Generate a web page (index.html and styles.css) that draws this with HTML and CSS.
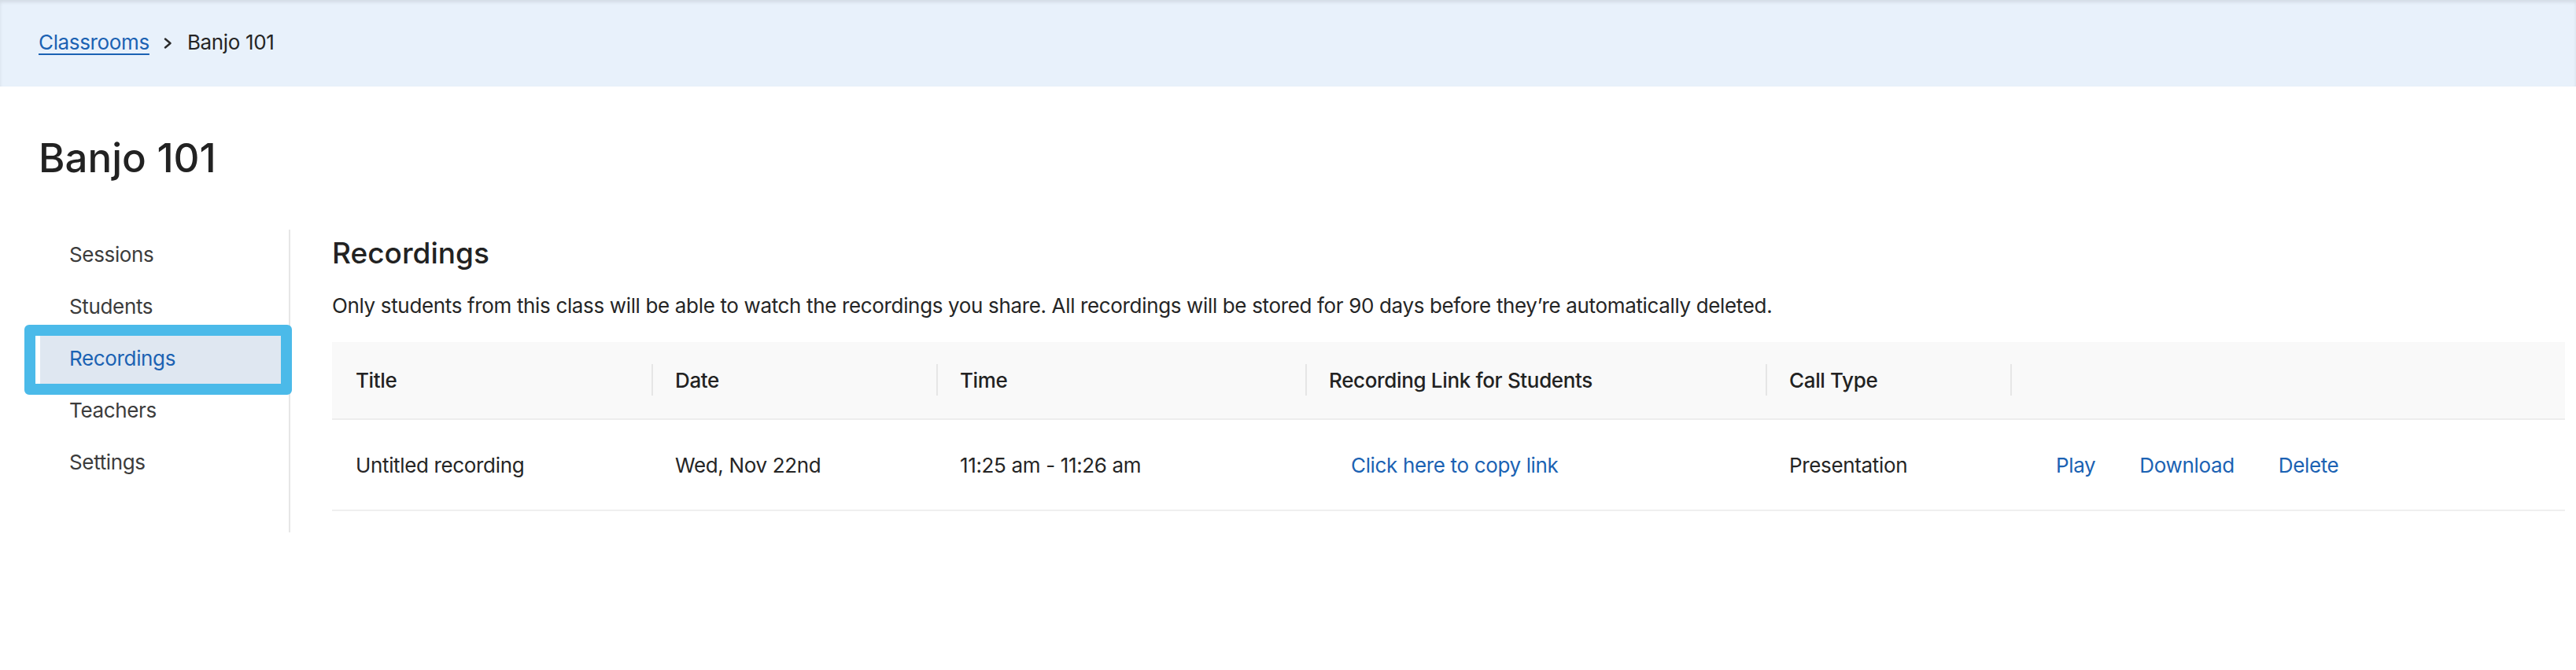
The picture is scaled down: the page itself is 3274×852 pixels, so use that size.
FILE: index.html
```html
<!DOCTYPE html>
<html lang="en">
<head>
  <meta charset="UTF-8">
  <title>Banjo 101 - Recordings</title>
  <link rel="stylesheet" href="styles.css">
</head>
<body>

  <div class="topbar">
    <nav class="breadcrumb">
      <a href="#" class="crumb-link">Classrooms</a>
      <svg class="crumb-sep" width="12" height="14" viewBox="0 0 12 14"><path d="M2 1.5 L8.5 7 L2 12.5" fill="none" stroke="#2a2a2a" stroke-width="2.4" stroke-linecap="round" stroke-linejoin="round"/></svg>
      <span class="crumb-current">Banjo 101</span>
    </nav>
  </div>

  <div class="page">
    <h1 class="class-title">Banjo 101</h1>

    <div class="layout">
      <aside class="sidebar">
        <a href="#" class="nav-link">Sessions</a>
        <a href="#" class="nav-link">Students</a>
        <a href="#" class="nav-link active">Recordings</a>
        <a href="#" class="nav-link">Teachers</a>
        <a href="#" class="nav-link">Settings</a>
      </aside>

      <main class="content">
        <h2>Recordings</h2>
        <p class="intro">Only students from this class will be able to watch the recordings you share. All recordings will be stored for 90 days before they’re automatically deleted.</p>

        <table class="rec-table">
          <colgroup>
            <col style="width: 406px">
            <col style="width: 362px">
            <col style="width: 469px">
            <col style="width: 585px">
            <col style="width: 311px">
            <col>
          </colgroup>
          <thead>
            <tr>
              <th>Title</th>
              <th>Date</th>
              <th>Time</th>
              <th>Recording Link for Students</th>
              <th>Call Type</th>
              <th></th>
            </tr>
          </thead>
          <tbody id="rows"></tbody>
        </table>
      </main>
    </div>
  </div>

  <script>
    const recordings = [
      {
        title: "Untitled recording",
        date: "Wed, Nov 22nd",
        time: "11:25 am - 11:26 am",
        type: "Presentation"
      }
    ];

    const tbody = document.getElementById("rows");
    recordings.forEach(r => {
      const tr = document.createElement("tr");
      tr.innerHTML = `<td>${r.title}</td><td>${r.date}</td><td>${r.time}</td>` +
        `<td><button class="link-btn">Click here to copy link</button></td>` +
        `<td>${r.type}</td>` +
        `<td><button class="link-btn">Play</button><button class="link-btn">Download</button><button class="link-btn">Delete</button></td>`;
      tbody.appendChild(tr);
    });
  </script>

</body>
</html>
```

FILE: styles.css
```css
body {
  margin: 0;
  font-family: Inter, "Noto Sans", sans-serif;
  font-size: 26px;
  letter-spacing: -0.35px;
  color: #252525;
  background-color: #ffffff;
}
.topbar {
  height: 110px;
  background-color: #e8f1fb;
  box-shadow: inset 0 3px 4px rgba(0, 0, 0, 0.09);
  display: flex;
  align-items: center;
  padding-left: 49px;
}
.breadcrumb {
  display: flex;
  align-items: center;
  gap: 18px;
  line-height: 36px;
  margin-top: -2px;
}
.crumb-link {
  color: #1b62b3;
  text-decoration: underline;
  text-decoration-thickness: 2px;
  text-underline-offset: 5px;
}
.crumb-sep {
  margin-top: 2px;
}
.crumb-current {
  color: #252525;
}
.page {
  padding: 0 14px 0 49px;
}
.class-title {
  margin: 61px 0 0;
  font-size: 51px;
  line-height: 60px;
  font-weight: 500;
  letter-spacing: 0;
  color: #222222;
}
.layout {
  display: flex;
  margin-top: 61px;
}
.sidebar {
  width: 312px;
  margin-left: -4px;
  padding: 3px 10px 57px 0;
  border-right: 2px solid #e6e6e6;
  display: flex;
  flex-direction: column;
  gap: 5px;
}
.nav-link {
  position: relative;
  height: 61px;
  line-height: 57px;
  padding-left: 43px;
  color: #3c3c3c;
  text-decoration: none;
}
.nav-link.active {
  background-color: #dfe7f1;
  box-shadow: inset 6px 0 0 #ffffff;
  color: #1b62b3;
}
.nav-link.active::after {
  content: "";
  position: absolute;
  top: -14px;
  left: -14px;
  right: -14px;
  bottom: -14px;
  border: 14px solid #4bbae9;
  border-radius: 6px;
}
.content {
  flex: 1;
  margin-left: 53px;
}
.content h2 {
  margin: 8px 0 0;
  font-size: 37px;
  line-height: 44px;
  font-weight: 500;
  letter-spacing: 0;
  color: #222222;
}
.intro {
  margin: 27px 0 0;
  line-height: 36px;
  color: #252525;
}
.rec-table {
  width: 100%;
  margin-top: 28px;
  border-collapse: collapse;
  table-layout: fixed;
}
.rec-table th {
  position: relative;
  height: 97px;
  padding: 0 30px;
  text-align: left;
  font-weight: 500;
  color: #222222;
  background-color: #f9f9f9;
  border-bottom: 2px solid #ededed;
}
.rec-table th + th::before {
  content: "";
  position: absolute;
  left: 0;
  top: 28px;
  width: 2px;
  height: 40px;
  background-color: #e6e6e6;
}
.rec-table td {
  height: 114px;
  padding: 0 30px;
  border-bottom: 2px solid #efefef;
  white-space: nowrap;
}
.link-btn {
  font-family: inherit;
  font-size: 26px;
  letter-spacing: inherit;
  color: #1b62b3;
  background: none;
  border: none;
  padding: 0 28px;
  cursor: pointer;
}
```
